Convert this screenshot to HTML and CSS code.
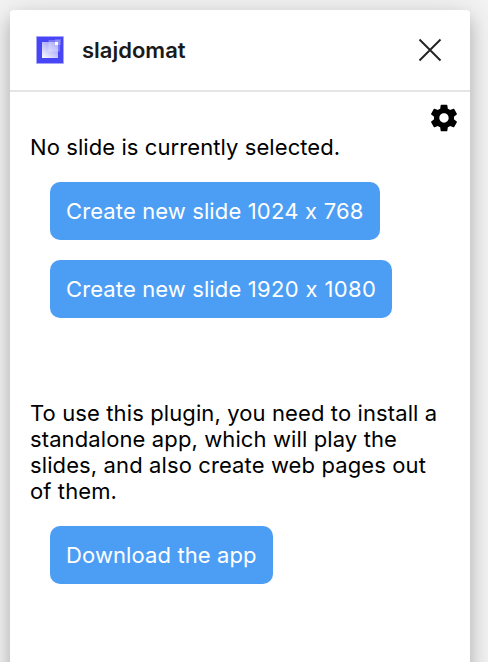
FILE: index.html
```html
<!DOCTYPE html>
<html lang="en">
<head>
<meta charset="utf-8">
<title>slajdomat</title>
<link rel="stylesheet" href="styles.css">
</head>
<body>
<main class="window">
  <header class="titlebar">
    <svg class="logo" width="28" height="28" viewBox="0 0 28 28" aria-hidden="true">
      <defs>
        <linearGradient id="base" x1="0.1" y1="1" x2="0.9" y2="0">
          <stop offset="0" stop-color="#fff" stop-opacity=".95"/>
          <stop offset="1" stop-color="#fff" stop-opacity=".4"/>
        </linearGradient>
        <linearGradient id="slide" x1="0" y1="1" x2="1" y2="0">
          <stop offset="0" stop-color="#fff" stop-opacity=".3"/>
          <stop offset="1" stop-color="#fff" stop-opacity=".25"/>
        </linearGradient>
      </defs>
      <rect width="28" height="28" rx="1" fill="#a5a4fa"/>
      <rect x="1" y="1" width="26" height="26" fill="#4845f4"/>
      <rect x="6" y="6" width="16" height="16" fill="url(#base)"/>
      <rect x="12.5" y="4" width="11.5" height="11.5" fill="url(#slide)"/>
      <rect x="19" y="3" width="6" height="6" fill="#fff" opacity=".2"/>
      <rect x="19" y="6" width="3" height="3" fill="#fff"/>
    </svg>
    <h1 class="title">slajdomat</h1>
    <svg class="close" width="24" height="24" viewBox="0 0 24 24" aria-hidden="true">
      <path d="M1.5 1.5 22.5 22.5M22.5 1.5 1.5 22.5" fill="none" stroke="#222" stroke-width="1.9"/>
    </svg>
  </header>
  <section class="content">
    <div class="toolbar">
      <svg class="gear" width="32" height="32" viewBox="0 0 24 24" aria-hidden="true">
        <path d="M19.43 12.98c.04-.32.07-.64.07-.98s-.03-.66-.07-.98l2.11-1.65c.19-.15.24-.42.12-.64l-2-3.46c-.12-.22-.39-.3-.61-.22l-2.49 1c-.52-.4-1.08-.73-1.69-.98l-.38-2.65C14.46 2.18 14.25 2 14 2h-4c-.25 0-.46.18-.49.42l-.38 2.65c-.61.25-1.17.59-1.69.98l-2.49-1c-.23-.09-.49 0-.61.22l-2 3.46c-.13.22-.07.49.12.64l2.11 1.65c-.04.32-.07.65-.07.98s.03.66.07.98l-2.11 1.65c-.19.15-.24.42-.12.64l2 3.46c.12.22.39.3.61.22l2.49-1c.52.4 1.08.73 1.69.98l.38 2.65c.03.24.24.42.49.42h4c.25 0 .46-.18.49-.42l.38-2.65c.61-.25 1.17-.59 1.69-.98l2.49 1c.23.09.49 0 .61-.22l2-3.46c.12-.22.07-.49-.12-.64l-2.11-1.65zM12 15.5c-1.93 0-3.5-1.57-3.5-3.5s1.57-3.5 3.5-3.5 3.5 1.57 3.5 3.5-1.57 3.5-3.5 3.5z"/>
      </svg>
    </div>
    <p class="message status">No slide is currently selected.</p>
    <div class="actions">
      <button class="button">Create new slide <span class="size">1024 x 768</span></button>
      <button class="button">Create new slide <span class="size size-wide">1920 x 1080</span></button>
    </div>
    <p class="message install">To use this plugin, you need to install a standalone app, which will play the slides, and also create web pages out of them.</p>
    <div class="actions">
      <button class="button">Download the app</button>
    </div>
  </section>
</main>
</body>
</html>
```
FILE: styles.css
```css
* {
  box-sizing: border-box;
}

body {
  margin: 0;
  height: 662px;
  overflow: hidden;
  padding: 10px 18px 0 10px;
  background: #f3f3f3;
  font-family: Inter, "Liberation Sans", sans-serif;
  font-size: 22px;
  line-height: 26px;
  letter-spacing: 0.11px;
  color: #000;
}

.window {
  height: 760px;
  background: #fff;
  border-radius: 4px;
  box-shadow: 0 4px 30px rgba(0, 0, 0, 0.16), 0 10px 16px rgba(0, 0, 0, 0.17);
}

.titlebar {
  display: flex;
  align-items: center;
  height: 82px;
  padding: 0 28px 0 26px;
  border-bottom: 2px solid #e5e5e5;
}

.title {
  flex: 1;
  margin: 0 0 0 18px;
  font-size: 22px;
  font-weight: 600;
  letter-spacing: 0;
  color: #1a1a1a;
}

.content {
  padding: 10px 20px 0;
}

.toolbar {
  display: flex;
  justify-content: flex-end;
  height: 32px;
  margin-right: -10px;
}

.message {
  margin: 0;
}

.status {
  letter-spacing: 0.08px;
}

.install {
  margin-top: 82px;
}

.actions {
  display: flex;
  flex-direction: column;
  align-items: flex-start;
  gap: 20px;
  padding: 22px 20px 0;
}

.button {
  height: 58px;
  padding: 0 16px;
  border: 0;
  border-radius: 10px;
  background: #4c9ef5;
  color: #fff;
  font: inherit;
  letter-spacing: inherit;
}

.size {
  letter-spacing: 0.22px;
}

.size-wide {
  letter-spacing: 0.36px;
}
```
